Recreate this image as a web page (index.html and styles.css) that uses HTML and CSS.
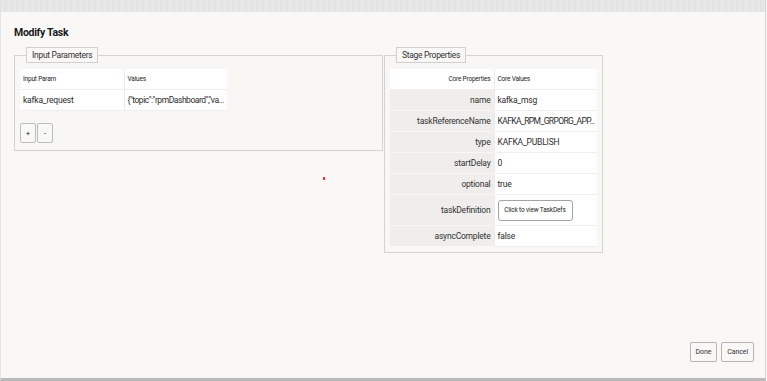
FILE: index.html
```html
<!DOCTYPE html>
<html lang="en">
<head>
    <meta charset="UTF-8">
    <title>Modify Task</title>
    <link rel="stylesheet" href="styles.css">
</head>
<body>
    <div class="dialog">
        <div class="topbar"></div>
        <div class="content">
            <h1 class="title">Modify Task</h1>
            <div class="panels">
                <fieldset class="panel panel-input">
                    <legend>Input Parameters</legend>
                    <table class="grid">
                        <colgroup><col class="col-a"><col class="col-b"></colgroup>
                        <tr class="head">
                            <th>Input Param</th>
                            <th>Values</th>
                        </tr>
                        <tr>
                            <td>kafka_request</td>
                            <td class="fit">{"topic":"rpmDashboard","va...</td>
                        </tr>
                    </table>
                    <div class="row-buttons">
                        <button class="small-btn">+</button>
                        <button class="small-btn">-</button>
                    </div>
                </fieldset>
                <fieldset class="panel panel-stage">
                    <legend>Stage Properties</legend>
                    <table class="grid props">
                        <colgroup><col class="col-a"><col class="col-b"></colgroup>
                        <tr class="head">
                            <th class="right">Core Properties</th>
                            <th>Core Values</th>
                        </tr>
                        <tr><td class="key">name</td><td>kafka_msg</td></tr>
                        <tr><td class="key">taskReferenceName</td><td class="fit tight">KAFKA_RPM_GRPORG_APP...</td></tr>
                        <tr><td class="key">type</td><td>KAFKA_PUBLISH</td></tr>
                        <tr><td class="key">startDelay</td><td>0</td></tr>
                        <tr><td class="key">optional</td><td>true</td></tr>
                        <tr class="tall"><td class="key">taskDefinition</td><td><button class="defs-btn">Click to view TaskDefs</button></td></tr>
                        <tr><td class="key">asyncComplete</td><td>false</td></tr>
                    </table>
                </fieldset>
            </div>
        </div>
        <div class="actions">
            <button class="action-btn">Done</button>
            <button class="action-btn">Cancel</button>
        </div>
        <div class="cursor-dot"></div>
    </div>
</body>
</html>
```

FILE: styles.css
```css
html, body {
    margin: 0;
    padding: 0;
    background: #f9f8f6;
}
body {
    font-family: Roboto, "Liberation Sans", Arial, sans-serif;
    color: #2b2b2b;
}
.dialog {
    position: relative;
    width: 766px;
    height: 381px;
    box-sizing: border-box;
    border-left: 1px solid #e4e4e2;
    border-right: 1px solid #d2d2d0;
    border-bottom: 3px solid #b9b9b9;
    display: flex;
    flex-direction: column;
}
.topbar {
    height: 12px;
    background: repeating-linear-gradient(90deg, #e2e2e2 0, #ebebeb 2px, #e0e0e0 4px, #e9e9e9 6px);
}
.content {
    padding: 0 0 0 13px;
}
.title {
    margin: 14px 0 7px 0;
    font-size: 10.5px;
    line-height: 14px;
    font-weight: bold;
    letter-spacing: -0.3px;
    color: #1a1a1a;
}
.panels {
    display: flex;
    align-items: flex-start;
    gap: 1px;
}
.panel {
    margin: 0;
    border: 1px solid #d3d3d1;
    background: #f8f7f5;
    min-width: 0;
}
.panel legend {
    margin-left: 6px;
    padding: 0 5px;
    height: 16px;
    box-sizing: border-box;
    border: 1px solid #cfcfcd;
    background: #f9f8f6;
    font-size: 8.5px;
    line-height: 14px;
    letter-spacing: -0.3px;
    color: #333;
}
.panel-input {
    width: 369px;
    box-sizing: border-box;
    padding: 6px 4px 7px 5px;
}
.panel-stage {
    width: 219px;
    box-sizing: border-box;
    padding: 6px 4px 5px 5px;
}
.grid {
    border-collapse: collapse;
    width: 207px;
    table-layout: fixed;
}
.grid col.col-a {
    width: 104px;
}
.grid col.col-b {
    width: 103px;
}
.grid th, .grid td {
    height: 20px;
    padding: 0 3px;
    background: #fff;
    border-bottom: 1px solid #eeeeec;
    font-size: 8.5px;
    letter-spacing: -0.2px;
    text-align: left;
    white-space: nowrap;
    overflow: hidden;
}
.grid td.fit {
    letter-spacing: -0.45px;
}
.grid td.tight {
    letter-spacing: -0.6px;
}
.grid th {
    font-weight: normal;
    font-size: 6.5px;
    color: #222;
}
.grid th:first-child, .grid td:first-child {
    border-right: 1px solid #ecebe9;
}
.grid th.right {
    text-align: right;
}
.grid td.key {
    text-align: right;
    background: #efeeec;
    border-bottom: 1px solid #f7f7f6;
    color: #333;
}
.props .tall td {
    height: 30px;
}
.row-buttons {
    display: flex;
    gap: 1px;
    margin-top: 12px;
}
.small-btn {
    width: 16px;
    height: 20px;
    padding: 0;
    border: 1px solid #bdbdbb;
    border-radius: 2px;
    background: #f8f8f6;
    font-family: inherit;
    font-size: 8px;
    color: #333;
}
.defs-btn {
    width: 75px;
    height: 21px;
    padding: 0;
    border: 1px solid #a3a3a3;
    border-radius: 3px;
    background: #fff;
    font-family: inherit;
    font-size: 6.5px;
    letter-spacing: -0.15px;
    color: #222;
}
.actions {
    margin-top: auto;
    display: flex;
    justify-content: flex-end;
    gap: 4px;
    padding: 0 11px 16px 0;
}
.action-btn {
    height: 20px;
    padding: 0 5px;
    border: 1px solid #b5b5b3;
    border-radius: 2px;
    background: #f9f8f6;
    font-family: inherit;
    font-size: 7px;
    letter-spacing: -0.1px;
    color: #333;
}
.cursor-dot {
    position: absolute;
    left: 322px;
    top: 177px;
    width: 2px;
    height: 3px;
    background: #ff2a2a;
}
```
